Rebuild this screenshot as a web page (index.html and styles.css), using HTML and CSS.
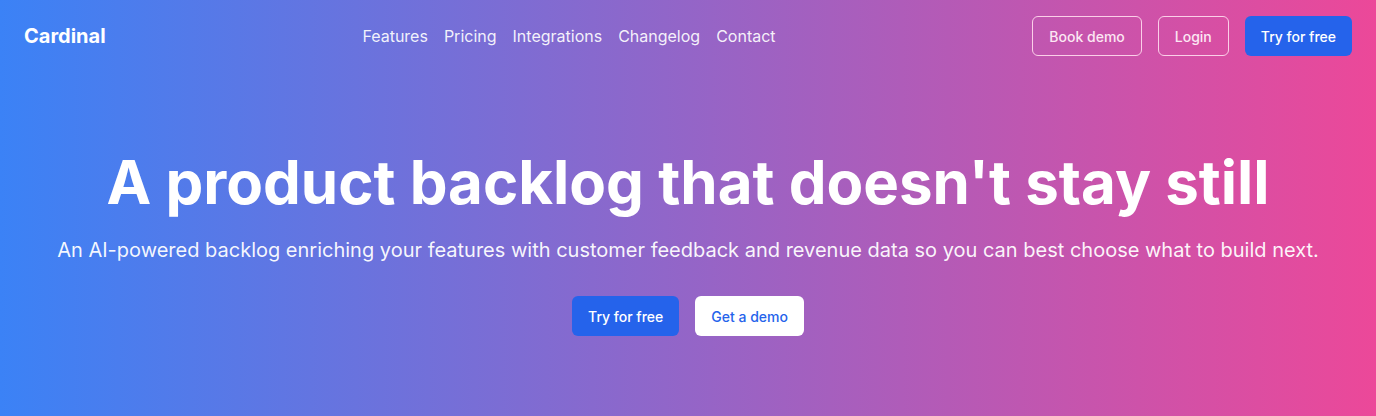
FILE: index.html
```html
<!DOCTYPE html>
<html lang="en">
<head>
<meta charset="utf-8">
<title>Cardinal</title>
<link rel="stylesheet" href="styles.css">
</head>
<body>
<div class="page">
  <header class="header">
    <div class="logo">Cardinal</div>
    <nav class="nav">
      <a href="#">Features</a>
      <a href="#">Pricing</a>
      <a href="#">Integrations</a>
      <a href="#">Changelog</a>
      <a href="#">Contact</a>
    </nav>
    <div class="actions">
      <a class="btn btn-outline" href="#">Book demo</a>
      <a class="btn btn-outline" href="#">Login</a>
      <a class="btn btn-primary" href="#">Try for free</a>
    </div>
  </header>
  <section class="hero">
    <h1>A product backlog that doesn't stay still</h1>
    <p>An AI-powered backlog enriching your features with customer feedback and revenue data so you can best choose what to build next.</p>
    <div class="hero-actions">
      <a class="btn btn-primary" href="#">Try for free</a>
      <a class="btn btn-white" href="#">Get a demo</a>
    </div>
  </section>
</div>
</body>
</html>
```

FILE: styles.css
```css
* { box-sizing: border-box; }
html, body { margin: 0; padding: 0; }
body {
  font-family: Inter, "Noto Sans", sans-serif;
  color: #fff;
}
.page {
  min-height: 416px;
  background: linear-gradient(to right, #3b82f6, #ec4899);
}
.header {
  display: flex;
  justify-content: space-between;
  align-items: center;
  padding: 16px 24px;
}
.logo {
  font-size: 20px;
  font-weight: 700;
  letter-spacing: 0;
}
.nav {
  display: flex;
  gap: 16px;
}
.nav a {
  color: rgba(255,255,255,0.92);
  text-decoration: none;
  font-size: 16px;
}
.actions {
  display: flex;
  gap: 16px;
}
.btn {
  display: inline-flex;
  align-items: center;
  justify-content: center;
  height: 40px;
  padding: 0 16px;
  border-radius: 6px;
  font-size: 14px;
  font-weight: 500;
  text-decoration: none;
}
.btn-outline {
  border: 1px solid #fbcfe8;
  color: #fce7f3;
}
.btn-primary {
  background: #2563eb;
  color: #fff;
}
.btn-white {
  background: #fff;
  color: #2563eb;
}
.hero {
  display: flex;
  flex-direction: column;
  align-items: center;
  text-align: center;
  padding-top: 80px;
}
.hero h1 {
  margin: 0;
  font-size: 60px;
  font-weight: 700;
  line-height: 1;
}
.hero p {
  margin: 24px 0 0;
  font-size: 20px;
  line-height: 28px;
  color: rgba(255,255,255,0.95);
}
.hero-actions {
  display: flex;
  gap: 16px;
  margin-top: 32px;
}
```
